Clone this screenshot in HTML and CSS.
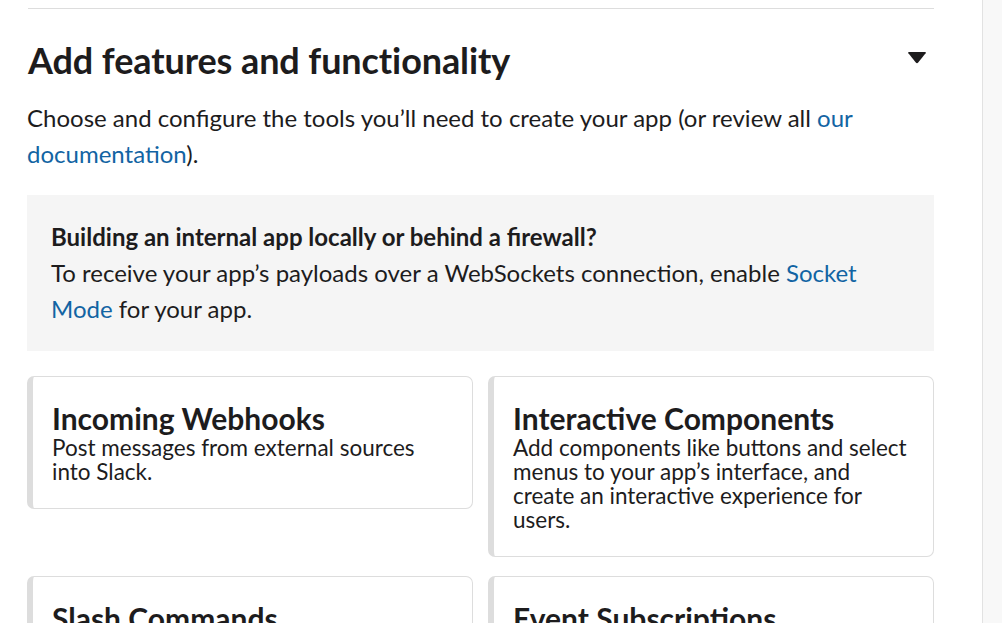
FILE: index.html
```html
<!DOCTYPE html>
<html lang="en">
<head>
<meta charset="utf-8">
<title>Add features and functionality</title>
<link rel="stylesheet" href="styles.css">
</head>
<body>
<div class="page">
  <main class="main">
    <section class="section">
      <div class="section-head">
        <h2 class="title">Add features and functionality</h2>
        <svg class="caret" width="20" height="13" viewBox="0 0 20 13" aria-hidden="true">
          <path d="M2 1 H18 Q19.5 1 18.6 2.3 L11.2 11.6 Q10 13 8.8 11.6 L1.4 2.3 Q0.5 1 2 1 Z" fill="#1d1c1d"/>
        </svg>
      </div>
      <p class="intro">Choose and configure the tools you’ll need to create your app (or review all <a href="#">our documentation</a>).</p>
      <div class="notice">
        <div class="notice-title">Building an internal app locally or behind a firewall?</div>
        <div class="notice-text">To receive your app’s payloads over a WebSockets connection, enable <a href="#">Socket Mode</a> for your app.</div>
      </div>
      <div class="cards">
        <div class="card">
          <div class="card-title">Incoming Webhooks</div>
          <div class="card-desc">Post messages from external sources into Slack.</div>
        </div>
        <div class="card">
          <div class="card-title">Interactive Components</div>
          <div class="card-desc">Add components like buttons and select menus to your app’s interface, and create an interactive experience for users.</div>
        </div>
        <div class="card">
          <div class="card-title">Slash Commands</div>
          <div class="card-desc">Allow users to perform app actions by typing commands in Slack.</div>
        </div>
        <div class="card">
          <div class="card-title">Event Subscriptions</div>
          <div class="card-desc">Make it easy to respond to activities in Slack.</div>
        </div>
      </div>
    </section>
  </main>
  <div class="rail"></div>
</div>
</body>
</html>
```

FILE: styles.css
```css
html, body {
  margin: 0;
  padding: 0;
  height: 100%;
  overflow: hidden;
  background: #fff;
}
body {
  font-family: Lato, "Open Sans", sans-serif;
  color: #1d1c1d;
}
a {
  color: #1264a3;
  text-decoration: none;
}
.page {
  display: flex;
  height: 100vh;
}
.main {
  flex: 1;
  padding: 8px 48px 0 27px;
  overflow: hidden;
}
.rail {
  width: 19px;
  flex: none;
  border-left: 1px solid #e2e2e2;
  background: #f8f8f8;
}
.section {
  border-top: 1px solid #dddddd;
  margin-left: 1px;
}
.section-head {
  display: flex;
  justify-content: space-between;
  align-items: flex-start;
  padding-top: 29px;
}
.title {
  margin: 0;
  font-size: 36px;
  line-height: 44px;
  font-weight: 700;
  letter-spacing: -0.1px;
}
.caret {
  margin-top: 13px;
  margin-right: 7px;
}
.intro {
  margin: 18px 0 0 -1px;
  font-size: 24px;
  line-height: 36px;
}
.notice {
  margin: 23px 0 0 -1px;
  background: #f5f5f5;
  padding: 24px;
  font-size: 24px;
  line-height: 36px;
}
.notice-title {
  font-weight: 700;
}
.cards {
  display: grid;
  grid-template-columns: 1fr 1fr;
  column-gap: 15px;
  row-gap: 19px;
  align-items: start;
  margin: 25px 0 0 -1px;
}
.card {
  border: 1px solid #dddddd;
  border-left: 6px solid #dddddd;
  border-radius: 7px;
  padding: 23px 22px 24px 19px;
}
.card-title {
  font-size: 30px;
  line-height: 36px;
  font-weight: 700;
}
.card-desc {
  font-size: 22.5px;
  line-height: 24px;
}
```
